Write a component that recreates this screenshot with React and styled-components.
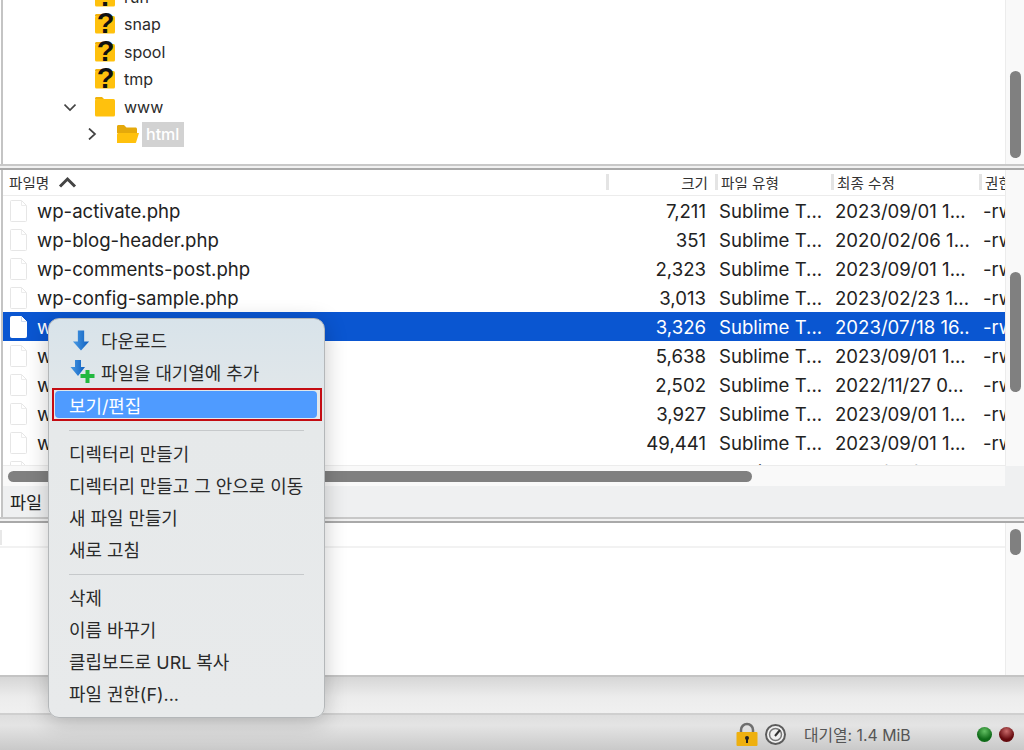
import { createGlobalStyle, styled } from 'styled-components'

const GlobalStyle = createGlobalStyle`
  html, body { margin: 0; padding: 0; background: #eff0f1; }
  body { font-family: Inter, "Noto Sans CJK KR", sans-serif; color: #222; }
`

const Page = styled.div`
  position: relative;
  width: 1024px;
  height: 750px;
  overflow: hidden;
  display: flex;
  flex-direction: column;
`

/* panes */
const Pane = styled.section`
  display: flex;
  height: ${(p) => p.$h}px;
  background: #fff;
  flex: none;
`
const PaneBody = styled.div`
  width: 1004px;
  margin-left: 1px;
  flex: none;
  overflow: hidden;
  box-sizing: border-box;
  border-left: 2px solid #c4c4c4;
`
const QueueBody = styled.div`
  width: 1005px;
  flex: none;
`
const Track = styled.div`
  flex: 1;
  background: #f9f9f9;
  border-left: 1px solid #ececec;
  padding: ${(p) => p.$top}px 3px 0 4px;
`
const Thumb = styled.div`
  width: 11px;
  height: ${(p) => p.$h}px;
  border-radius: 6px;
  background: #808080;
`
const Sash = styled.div`
  height: 6px;
  flex: none;
  box-sizing: border-box;
  background: #f1f1f1;
  border-top: 2px solid #c8c8c8;
  border-bottom: 2px solid #a9a9a9;
`

/* tree */
const Tree = styled.ul`
  list-style: none;
  margin: -17px 0 0;
  padding: 0;
`
const TreeRow = styled.li`
  height: 27.5px;
  display: flex;
  align-items: center;
  padding-left: ${(p) => p.$indent}px;
  font-size: 16px;
  color: #2b2b2b;
`
const Twisty = styled.span`
  width: 24px;
  height: 16px;
  flex: none;
  margin-left: -29px;
  margin-right: 5px;
  display: flex;
  align-items: center;
  color: #444;
`
const TreeLabel = styled.span`
  margin-left: ${(p) => (p.$selected ? 1 : 5)}px;
  padding: ${(p) => (p.$selected ? '1px 5px 1px 4px' : 0)};
  height: ${(p) => (p.$selected ? '23px' : 'auto')};
  line-height: ${(p) => (p.$selected ? '23px' : 'normal')};
  background: ${(p) => (p.$selected ? '#d2d2d2' : 'transparent')};
  color: ${(p) => (p.$selected ? '#fff' : 'inherit')};
  font-weight: ${(p) => (p.$selected ? 500 : 400)};
`

/* file list */
const ListColumn = styled.div`
  width: 1004px;
  margin-left: 1px;
  flex: none;
  display: flex;
  flex-direction: column;
  box-sizing: border-box;
  border-left: 2px solid #c4c4c4;
`
const Cols = `
  display: grid;
  grid-template-columns: 603px 109px 116px 148px 29px;
`
const ListHeader = styled.div`
  ${Cols}
  height: 25px;
  flex: none;
  border-bottom: 1px solid #ececec;
  font-size: 14.600px;
  color: #333;
  background: #fff;
`
const HeadCell = styled.div`
  display: flex;
  align-items: center;
  justify-content: ${(p) => (p.$right ? 'flex-end' : 'flex-start')};
  padding: ${(p) => (p.$right ? '0 7px 0 0' : p.$first ? '0 0 0 6px' : '0 0 0 3px')};
  border-left: ${(p) => (p.$first ? 'none' : '3px solid #e4e4e4')};
  margin: 4px 0 5px;
  white-space: nowrap;
  overflow: hidden;
  gap: 9px;
`
const Rows = styled.div`
  height: 269px;
  flex: none;
  overflow: hidden;
  background: #fff;
`
const Row = styled.div`
  ${Cols}
  height: 29.1px;
  align-items: center;
  font-size: 18.600px;
  white-space: nowrap;
  color: ${(p) => (p.$selected ? '#fff' : '#222')};
  background: ${(p) => (p.$selected ? '#0a56d1' : 'transparent')};
`
const NameCell = styled.div`
  display: flex;
  align-items: center;
  gap: 8px;
  padding-left: 6px;
`
const SizeCell = styled.div`
  text-align: right;
  padding-right: 9px;
`
const TextCell = styled.div`
  padding-left: 4px;
  overflow: hidden;
`
const HScroll = styled.div`
  height: 21px;
  flex: none;
  box-sizing: border-box;
  padding: 5px 0 0 5px;
  background: #f9f9f9;
  border-top: 1px solid #ececec;
`
const HThumb = styled.div`
  width: 744px;
  height: 11px;
  border-radius: 6px;
  background: #808080;
`
const ListStatus = styled.div`
  flex: 1;
  display: flex;
  align-items: center;
  padding-left: 7px;
  font-size: 17.500px;
  background: #eff0f1;
`
const ListSide = styled.div`
  flex: 1;
  display: flex;
  flex-direction: column;
`
const ListTrack = styled.div`
  height: 296px;
  flex: none;
  box-sizing: border-box;
  background: #f9f9f9;
  border-left: 1px solid #ececec;
  padding: 102px 3px 0 4px;
`
const SideFill = styled.div`
  flex: 1;
  background: #eff0f1;
`

/* queue */
const QueueHead = styled.div`
  height: 25px;
  box-sizing: border-box;
  border-bottom: 2px solid #f2f2f2;
  padding-top: 7px;
`
const QueueTick = styled.div`
  width: 2px;
  height: 15px;
  background: #e8e8e8;
`

/* bottom bars */
const Toolbar = styled.div`
  height: 40px;
  flex: none;
  box-sizing: border-box;
  border-top: 2px solid #c4c4c4;
  border-bottom: 2px solid #cfcfcf;
  background: linear-gradient(#d6d6d6, #ececec 55%, #f0f0f0);
`
const StatusBar = styled.footer`
  flex: 1;
  display: flex;
  align-items: center;
  padding: 3px 10px 0 0;
  justify-content: flex-end;
  background: linear-gradient(#dedede, #e4e4e4 30%, #c9c9c9);
`
const StatusText = styled.span`
  width: 173px;
  margin-left: 17px;
  font-size: 15.800px;
  color: #555;
  white-space: nowrap;
`
const IconGap = styled.span`
  display: flex;
  margin-left: ${(p) => p.$gap || 0}px;
`
const Led = styled.span`
  width: 15px;
  height: 15px;
  border-radius: 50%;
  margin-left: ${(p) => p.$gap || 0}px;
  background: radial-gradient(circle at 50% 28%, ${(p) => p.$light}, ${(p) => p.$dark} 62%);
`

/* context menu */
const Menu = styled.div`
  position: absolute;
  left: 48px;
  top: 318px;
  width: 277px;
  height: 400px;
  box-sizing: border-box;
  padding-top: 5px;
  border: 1px solid #b4b7b9;
  border-radius: 11px;
  background: linear-gradient(#d8e3ea, #e6e9ea 28%, #e8eaeb);
  box-shadow: 0 4px 22px rgba(0, 0, 0, 0.22);
`
const MenuItem = styled.div`
  height: 32px;
  display: flex;
  align-items: center;
  padding-left: 20px;
  font-size: 17.900px;
  color: #2a2a2a;
  white-space: nowrap;
`
const MenuIcon = styled.span`
  width: 32px;
  box-sizing: border-box;
  padding-left: ${(p) => p.$pad || 0}px;
  flex: none;
  display: flex;
`
const Picked = styled.div`
  height: 33px;
  margin: 0 2px 0 3px;
  box-sizing: border-box;
  border: 2px solid #c40c12;
  padding: 1px 3px 1px 1px;
`
const PickedInner = styled.div`
  height: 100%;
  display: flex;
  align-items: center;
  padding-left: 14px;
  border-radius: 4px;
  background: #4f9bff;
  color: #fff;
  font-size: 17.900px;
`
const MenuRule = styled.hr`
  height: 1px;
  border: 0;
  margin: 9px 20px 6px 20px;
  background: #c6c9cb;
`
const FolderSvg = styled.svg`
  overflow: visible;
  flex: none;
`

const Folder = ({ open, unknown }) => (
  <FolderSvg width="26" height="24" viewBox="0 0 26 24">
    {open ? (
      <>
        <path d="M2 4.500C2 3.600 2.600 3 3.500 3H9l2.500 2.500h9c.8 0 1.500.7 1.500 1.500v4H2z" fill="#e5a90b" />
        <path d="M2 21V12.500C2 11.600 2.600 11 3.500 11H24l-3 9.500c-.2.4-.6.5-1 .5z" fill="#ffc10d" />
      </>
    ) : (
      <>
        <path d="M2 3.500C2 2.600 2.600 2 3.500 2H9l2.500 2.500H2z" fill="#f0b20b" />
        <rect x="2" y="4" width="20" height="17.500" rx="1.500" fill="#ffc10d" />
      </>
    )}
    {unknown && (
      <text x="12.500" y="21" textAnchor="middle" fontFamily="Liberation Sans, sans-serif" fontWeight="700" fontSize="29" fill="#111">?</text>
    )}
  </FolderSvg>
)

const Doc = ({ selected }) => (
  <svg width="20" height="24" viewBox="0 0 20 24">
    <path d="M2.500 1.500h10l5 5v15a1 1 0 0 1-1 1h-14a1 1 0 0 1-1-1v-19a1 1 0 0 1 1-1z" fill="#fff" stroke={selected ? '#fff' : '#e6e6e6'} />
    <path d="M12.500 1.500v5h5" fill="none" stroke={selected ? '#cfdcf3' : '#ececec'} />
  </svg>
)

const Down = () => (
  <svg width="18" height="23" viewBox="0 0 20 24">
    <defs>
      <linearGradient id="dl" x1="0" x2="1" y1="0" y2="0">
        <stop offset="0" stopColor="#4a9be4" />
        <stop offset="1" stopColor="#0f5fc0" />
      </linearGradient>
    </defs>
    <path d="M6.500 1h7v12H19l-9 10-9-10h5.500z" fill="url(#dl)" />
  </svg>
)

const DownPlus = () => (
  <svg width="26" height="26" viewBox="0 0 26 26">
    <defs>
      <linearGradient id="dq" x1="0" x2="1" y1="0" y2="0">
        <stop offset="0" stopColor="#4a9be4" />
        <stop offset="1" stopColor="#0f5fc0" />
      </linearGradient>
    </defs>
    <path d="M5 1h6v7h4l-7 9-7.500-9H5z" fill="url(#dq)" />
    <path d="M15.500 11h4v4h5v4h-5v5h-4v-5h-5v-4h5z" fill="#22b83f" />
  </svg>
)

const Chevron = ({ dir }) => (
  <svg width="12" height="12" viewBox="0 0 12 12" fill="none" stroke="#444" strokeWidth="1.700">
    <path d={dir === 'down' ? 'M.5 3.500l5.500 5.500 5.500-5.500' : 'M3 .5l6 5.500-6 5.500'} />
  </svg>
)

const SortUp = () => (
  <svg width="19" height="12" viewBox="0 0 19 12" fill="none" stroke="#444" strokeWidth="3">
    <path d="M2 10.500l7.500-7.500 7.500 7.500" />
  </svg>
)

const Lock = () => (
  <svg width="22" height="25" viewBox="0 0 22 25">
    <path d="M5 12V8a6 6 0 0 1 12 0v4" fill="none" stroke="#6f6f6f" strokeWidth="2.500" />
    <rect x="0.500" y="10" width="21" height="14" rx="1" fill="#eeb00f" />
    <circle cx="11" cy="16" r="2" fill="#222" />
    <path d="M10 16h2v5h-2z" fill="#222" />
  </svg>
)

const Gauge = () => (
  <svg width="23" height="23" viewBox="0 0 23 23" fill="none">
    <circle cx="11.500" cy="11.500" r="10.500" fill="#5c5c5c" />
    <circle cx="11.500" cy="11.500" r="8.500" fill="#f1f1f1" />
    <circle cx="11.500" cy="11.500" r="6" stroke="#777" strokeWidth="1.500" />
    <path d="M11 13l5-6" stroke="#333" strokeWidth="2" />
  </svg>
)

const treeRows = [
  { name: 'run', unknown: true },
  { name: 'snap', unknown: true },
  { name: 'spool', unknown: true },
  { name: 'tmp', unknown: true },
  { name: 'www', twisty: 'down' },
]

const files = [
  ['wp-activate.php', '7,211', '2023/09/01 1...'],
  ['wp-blog-header.php', '351', '2020/02/06 1...'],
  ['wp-comments-post.php', '2,323', '2023/09/01 1...'],
  ['wp-config-sample.php', '3,013', '2023/02/23 1...'],
  ['wp-config.php', '3,326', '2023/07/18 16..', true],
  ['wp-cron.php', '5,638', '2023/09/01 1...'],
  ['wp-links-opml.php', '2,502', '2022/11/27 0...'],
  ['wp-load.php', '3,927', '2023/09/01 1...'],
  ['wp-login.php', '49,441', '2023/09/01 1...'],
  ['wp-mail.php', '8,525', '2023/09/01 1...'],
]

export default function App() {
  return (
    <Page>
      <GlobalStyle />

      <Pane $h={164}>
        <PaneBody>
          <Tree>
            {treeRows.map((r) => (
              <TreeRow key={r.name} $indent={90}>
                {r.twisty && <Twisty><Chevron dir={r.twisty} /></Twisty>}
                <Folder unknown={r.unknown} />
                <TreeLabel>{r.name}</TreeLabel>
              </TreeRow>
            ))}
            <TreeRow $indent={112}>
              <Twisty><Chevron dir="right" /></Twisty>
              <Folder open />
              <TreeLabel $selected>html</TreeLabel>
            </TreeRow>
          </Tree>
        </PaneBody>
        <Track $top={71}><Thumb $h={87} /></Track>
      </Pane>
      <Sash />

      <Pane $h={347}>
        <ListColumn>
          <ListHeader>
            <HeadCell $first>파일명 <SortUp /></HeadCell>
            <HeadCell $right>크기</HeadCell>
            <HeadCell>파일 유형</HeadCell>
            <HeadCell>최종 수정</HeadCell>
            <HeadCell>권한</HeadCell>
          </ListHeader>
          <Rows>
            {files.map(([name, size, date, selected]) => (
              <Row key={name} $selected={selected}>
                <NameCell><Doc selected={selected} />{name}</NameCell>
                <SizeCell>{size}</SizeCell>
                <TextCell>Sublime T...</TextCell>
                <TextCell>{date}</TextCell>
                <TextCell>-rw</TextCell>
              </Row>
            ))}
          </Rows>
          <HScroll><HThumb /></HScroll>
          <ListStatus>파일</ListStatus>
        </ListColumn>
        <ListSide>
          <ListTrack><Thumb $h={120} /></ListTrack>
          <SideFill />
        </ListSide>
      </Pane>
      <Sash />

      <Pane $h={152}>
        <QueueBody>
          <QueueHead><QueueTick /></QueueHead>
        </QueueBody>
        <Track $top={6}><Thumb $h={26} /></Track>
      </Pane>

      <Toolbar />
      <StatusBar>
        <IconGap><Lock /></IconGap>
        <IconGap $gap={6}><Gauge /></IconGap>
        <StatusText>대기열: 1.4 MiB</StatusText>
        <Led $light="#63c063" $dark="#0f6b18" />
        <Led $gap={7} $light="#c96a6a" $dark="#650a0e" />
      </StatusBar>

      <Menu>
        <MenuItem><MenuIcon $pad={3}><Down /></MenuIcon>다운로드</MenuItem>
        <MenuItem><MenuIcon $pad={1}><DownPlus /></MenuIcon>파일을 대기열에 추가</MenuItem>
        <Picked><PickedInner>보기/편집</PickedInner></Picked>
        <MenuRule />
        <MenuItem>디렉터리 만들기</MenuItem>
        <MenuItem>디렉터리 만들고 그 안으로 이동</MenuItem>
        <MenuItem>새 파일 만들기</MenuItem>
        <MenuItem>새로 고침</MenuItem>
        <MenuRule />
        <MenuItem>삭제</MenuItem>
        <MenuItem>이름 바꾸기</MenuItem>
        <MenuItem>클립보드로 URL 복사</MenuItem>
        <MenuItem>파일 권한(F)...</MenuItem>
      </Menu>
    </Page>
  )
}
